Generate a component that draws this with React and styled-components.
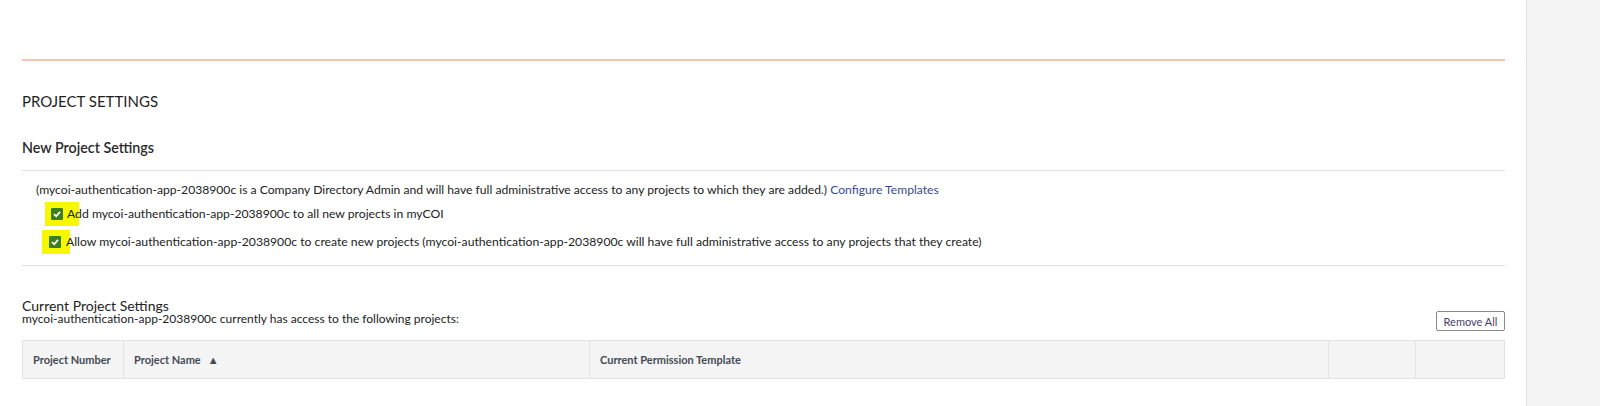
import React from "react";
import styled, { createGlobalStyle } from "styled-components";

const Global = createGlobalStyle`
  html, body { margin: 0; padding: 0; background: #fff; }
  body { font-family: Lato, "Open Sans", sans-serif; color: #222; }
`;

const Page = styled.div`
  display: flex;
  width: 1600px;
  height: 406px;
  overflow: hidden;
`;

const Main = styled.div`
  flex: 1;
  padding: 59px 21px 0 22px;
`;

const Side = styled.div`
  width: 73px;
  background: #f3f3f3;
  border-left: 1px solid #e4e4e4;
`;

const Rule = styled.div`
  height: 2px;
  background: #f8c4b4;
`;

const PageTitle = styled.div`
  font-size: 15px;
  margin-top: 31px;
  line-height: 18px;
  color: #1f1f1f;
`;

const SectionTitle = styled.div`
  font-size: 14.3px;
  font-weight: 600;
  line-height: 17px;
  margin-top: ${p => p.$top}px;
  color: #2a2a2a;
`;

const Divider = styled.div`
  height: 1px;
  background: #e0e0e0;
  margin-top: ${p => p.$top}px;
`;

const Info = styled.div`
  font-size: 12.15px;
  line-height: 14px;
  margin: 12px 0 0 14px;
  color: #222;
`;

const Link = styled.a`
  color: #3a4a8f;
  text-decoration: none;
`;

const CheckRow = styled.div`
  display: flex;
  align-items: center;
  font-size: 12.2px;
  line-height: 14px;
  margin-top: ${p => p.$top}px;
  padding-left: ${p => p.$pad}px;
`;

const Highlight = styled.span`
  display: inline-flex;
  align-items: center;
  justify-content: flex-end;
  background: #f7f700;
  width: ${p => p.$w}px;
  height: ${p => p.$h}px;
  margin-right: ${p => p.$mr}px;
  padding-right: ${p => p.$pr}px;
  box-sizing: border-box;
`;

const Box = styled.span`
  width: 12px;
  height: 12px;
  background: #3c7d1c;
  border-radius: 1px;
  display: inline-flex;
  align-items: center;
  justify-content: center;
`;

const Head = styled.div`
  display: flex;
  align-items: flex-end;
  justify-content: space-between;
  margin-top: 33px;
`;

const HeadText = styled.div`
  display: flex;
  flex-direction: column;
`;

const SubTitle = styled.div`
  font-size: 14px;
  line-height: 14px;
  color: #222;
`;

const SubText = styled.div`
  font-size: 12px;
  line-height: 12px;
  color: #222;
`;

const Button = styled.button`
  font-family: Lato, sans-serif;
  font-size: 11px;
  color: #4a3f6b;
  background: #fff;
  border: 1px solid #888;
  border-radius: 2px;
  height: 20px;
  width: 69px;
  padding: 0;
  margin-bottom: -6px;
`;

const Table = styled.div`
  display: grid;
  grid-template-columns: 100px 466px 739px 87px 1fr;
  margin-top: 15px;
  border: 1px solid #e2e2e2;
  background: #f4f4f4;
  height: 37px;
`;

const Th = styled.div`
  display: flex;
  align-items: center;
  padding-left: 10px;
  font-size: 11px;
  font-weight: 700;
  color: #444a55;
  border-left: ${p => (p.$first ? "none" : "1px solid #e2e2e2")};
  gap: 7px;
`;

const Check = () => (
  <svg width="10" height="10" viewBox="0 0 10 10">
    <path d="M2 5.2 L4.2 7.3 L8 2.8" stroke="#fff" strokeWidth="1.8" fill="none" />
  </svg>
);

export default function App() {
  return (
    <>
      <Global />
      <Page>
        <Main>
          <Rule />
          <PageTitle>PROJECT SETTINGS</PageTitle>
          <SectionTitle $top={29}>New Project Settings</SectionTitle>
          <Divider $top={14} />
          <Info>
            (mycoi-authentication-app-2038900c is a Company Directory Admin and will have full administrative access to any projects to which they are added.){" "}
            <Link href="#">Configure Templates</Link>
          </Info>
          <CheckRow $top={5} $pad={23}>
            <Highlight $w={34} $h={24} $mr={-12} $pr={16}>
              <Box><Check /></Box>
            </Highlight>
            Add mycoi-authentication-app-2038900c to all new projects in myCOI
          </CheckRow>
          <CheckRow $top={4} $pad={20}>
            <Highlight $w={28} $h={24} $mr={-4} $pr={9}>
              <Box><Check /></Box>
            </Highlight>
            Allow mycoi-authentication-app-2038900c to create new projects (mycoi-authentication-app-2038900c will have full administrative access to any projects that they create)
          </CheckRow>
          <Divider $top={11} />
          <Head>
            <HeadText>
              <SubTitle>Current Project Settings</SubTitle>
              <SubText>mycoi-authentication-app-2038900c currently has access to the following projects:</SubText>
            </HeadText>
            <Button>Remove All</Button>
          </Head>
          <Table>
            <Th $first>Project Number</Th>
            <Th>Project Name <span>▲</span></Th>
            <Th>Current Permission Template</Th>
            <Th />
            <Th />
          </Table>
        </Main>
        <Side />
      </Page>
    </>
  );
}
